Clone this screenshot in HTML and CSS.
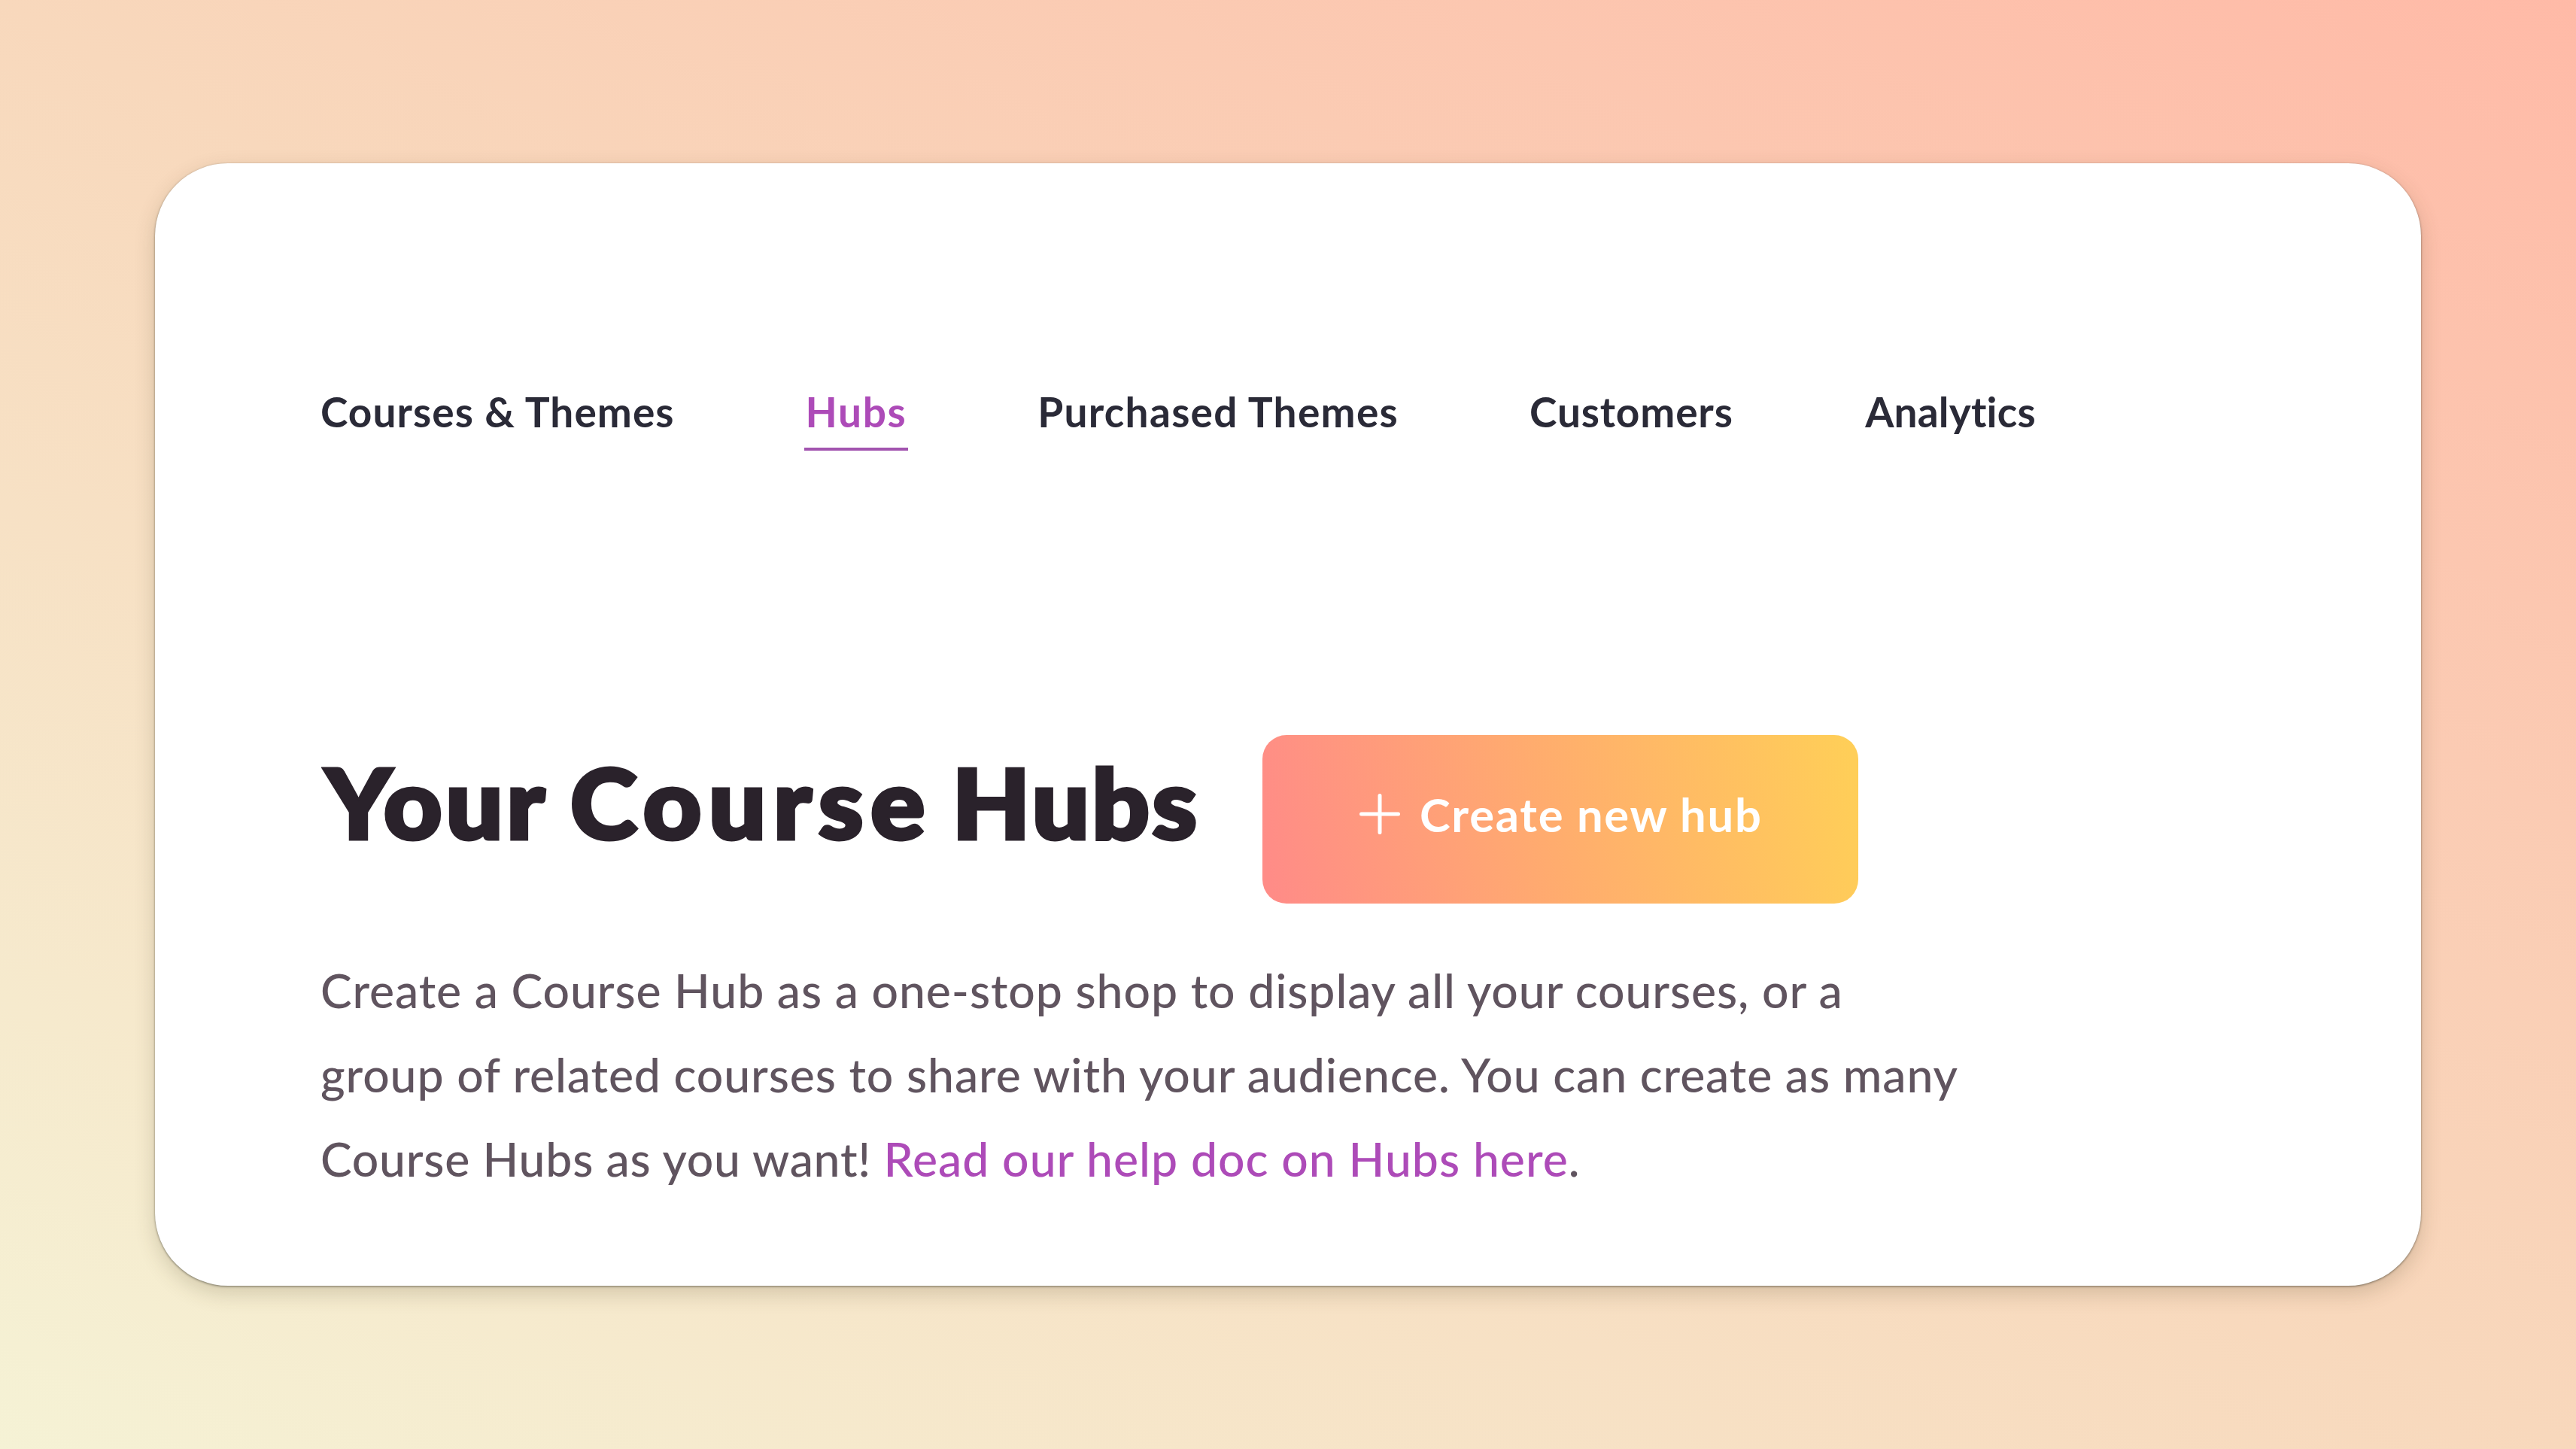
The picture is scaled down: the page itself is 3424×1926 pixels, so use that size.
FILE: index.html
```html
<!DOCTYPE html>
<html lang="en">
<head>
<meta charset="utf-8">
<title>Your Course Hubs</title>
<link rel="stylesheet" href="styles.css">
</head>
<body>
<main class="card">
  <nav class="tabs">
    <a class="tab tab-courses">Courses &amp; Themes</a>
    <a class="tab tab-hubs active">Hubs</a>
    <a class="tab tab-purchased">Purchased Themes</a>
    <a class="tab tab-customers">Customers</a>
    <a class="tab tab-analytics">Analytics</a>
  </nav>
  <header class="heading">
    <h1 class="title"><span class="word-your">Your</span> <span class="word-course">Course</span> <span class="word-hubs">Hubs</span></h1>
    <button class="create" type="button">
      <svg class="plus" viewBox="0 0 54 54" aria-hidden="true"><path d="M27 2.5v49M2.5 27h49"/></svg>
      <span class="create-label">Create new hub</span>
    </button>
  </header>
  <p class="intro">
    <span class="line">Create a Course Hub as a one-stop shop to display all your courses, or a</span>
    <span class="line">group of related courses to share with your audience. You can create as many</span>
    <span class="line"><span class="lead">Course Hubs as you want! </span><a class="link">Read our help doc on Hubs here</a>.</span>
  </p>
</main>
</body>
</html>
```
FILE: styles.css
```css
* { box-sizing: border-box; }

body {
  margin: 0;
  width: 3424px;
  height: 1926px;
  overflow: hidden;
  padding: 217px 206px;
  background: linear-gradient(to top right, #f5f2d5 0%, #f8d8bc 50%, #ffbaa7 100%);
  font-family: Lato, "Open Sans", sans-serif;
  font-weight: 500;
  font-variant-ligatures: none;
  color: #60545f;
}

.card {
  width: 3012px;
  height: 1492px;
  padding: 287px 219px 0 220px;
  border-radius: 97px;
  background: #fff;
  box-shadow: 0 1px 3px rgba(40, 40, 30, .55), 0 10px 28px rgba(70, 60, 30, .2);
}

.tabs {
  display: flex;
  gap: 172px;
  height: 95px;
}

.tab {
  height: 95px;
  line-height: 86px;
  font-size: 55px;
  font-weight: 700;
  letter-spacing: 1.04px;
  white-space: nowrap;
  color: #2a2a37;
}

.tab.active {
  padding: 0 2px;
  letter-spacing: 1.6px;
  color: #ad4bb8;
  border-bottom: 4px solid #a254af;
}

.tab-purchased { letter-spacing: 1.3px; }
.tab-customers { letter-spacing: .83px; margin-left: 2px; }
.tab-analytics { letter-spacing: .2px; margin-left: 3.5px; }

.heading {
  display: flex;
  align-items: flex-start;
  margin-top: 378px;
}

.title {
  margin: 0;
  padding-left: 6px;
  width: 1252px;
  font-size: 128px;
  line-height: 178px;
  font-weight: 900;
  letter-spacing: 6px;
  white-space: nowrap;
  color: #2a222b;
  -webkit-text-stroke: 5px #2a222b;
  stroke-linejoin: round;
  paint-order: stroke fill;
  transform: scaleX(1.05);
  transform-origin: left;
}

.word-your { letter-spacing: 4.5px; margin-right: -8.4px; }
.word-course { letter-spacing: 9.2px; margin-right: -11px; }
.word-hubs { letter-spacing: 3.3px; }

.create {
  display: flex;
  align-items: center;
  width: 792px;
  height: 224px;
  padding: 0 0 15px 129px;
  border: 0;
  border-radius: 32px;
  background: linear-gradient(78deg, #ff8c87 2%, #ffac6e 48%, #ffce58 98%);
  color: #fff;
  font: 700 61.5px Lato, "Open Sans", sans-serif;
  letter-spacing: 1.75px;
}

.plus {
  width: 54px;
  height: 54px;
  margin-right: 26px;
  fill: none;
  stroke: #fff;
  stroke-width: 5;
  stroke-linecap: round;
}

.intro {
  margin: 59px 0 0;
  font-size: 62.5px;
  line-height: 112px;
}

.line {
  display: block;
  white-space: nowrap;
  letter-spacing: .9px;
}

.lead { letter-spacing: .75px; }

.link {
  letter-spacing: 1px;
  color: #ad4bb8;
}
```
